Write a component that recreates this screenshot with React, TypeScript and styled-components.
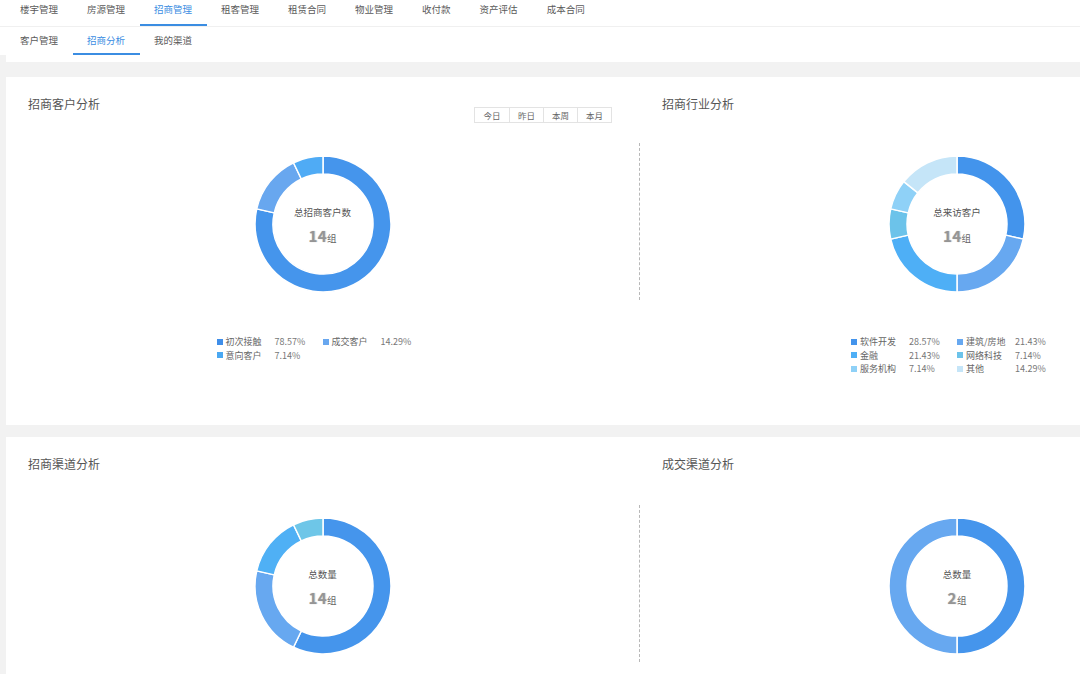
import React from "react";
import styled, { createGlobalStyle } from "styled-components";

const Global = createGlobalStyle`
  html, body { margin: 0; padding: 0; overflow: hidden; background: #f2f2f2; }
  body { font-family: "Noto Sans CJK SC", "Noto Sans", sans-serif; color: #555; }
  * { box-sizing: border-box; }
`;

const Page = styled.div`
  width: 1280px;
  min-height: 674px;
  background: #f2f2f2;
`;

const NavRow = styled.nav<{ $second?: boolean }>`
  display: flex;
  background: #fff;
  padding-left: 5.5px;
  height: ${(p) => (p.$second ? "28px" : "27px")};
  border-bottom: ${(p) => (p.$second ? "none" : "1px solid #f0f0f0")};
`;

const NavItem = styled.div<{ $active?: boolean; $second?: boolean }>`
  padding: ${(p) => (p.$second ? "4px" : "0")} 14.5px 0;
  height: ${(p) => (p.$second ? "28px" : "26px")};
  line-height: 18px;
  font-size: 9.5px;
  color: ${(p) => (p.$active ? "#3b8de2" : "#5a5a5a")};
  border-bottom: 2px solid ${(p) => (p.$active ? "#3b8de2" : "transparent")};
  white-space: nowrap;
`;

const Content = styled.main`
  padding: 0 6px;
  display: flex;
  flex-direction: column;
`;

const Strip = styled.div`
  height: 7px;
  background: #fff;
  margin-bottom: 15px;
`;

const Card = styled.section<{ $h?: number; $gap?: number }>`
  background: #fff;
  height: ${(p) => (p.$h ? `${p.$h}px` : "auto")};
  margin-bottom: ${(p) => p.$gap ?? 0}px;
  display: grid;
  grid-template-columns: 633px 1px 634px;
`;

const Half = styled.div`
  display: flex;
  flex-direction: column;
  padding-left: 22px;
`;

const Header = styled.div`
  height: 46px;
  display: flex;
  justify-content: space-between;
  align-items: flex-start;
  padding-right: 27px;
`;

const Title = styled.h2`
  margin: 19px 0 0;
  font-size: 12px;
  line-height: 16px;
  font-weight: 400;
  color: #555;
`;

const BtnGroup = styled.div`
  margin-top: 30px;
  display: flex;
  border: 1px solid #e3e3e3;
`;

const Btn = styled.div`
  width: 34px;
  height: 14px;
  line-height: 14px;
  text-align: center;
  font-size: 8.5px;
  color: #666;
  & + & { border-left: 1px solid #e3e3e3; }
`;

const Divider = styled.div<{ $top: number }>`
  margin-top: ${(p) => p.$top}px;
  height: 157px;
  border-left: 1px dashed #b8b8b8;
`;

const ChartWrap = styled.div<{ $top: number }>`
  margin-top: ${(p) => p.$top}px;
  margin-left: -22px;
  display: grid;
  place-items: center;
  & > * { grid-area: 1 / 1; }
`;

const Center = styled.div`
  display: flex;
  flex-direction: column;
  align-items: center;
  padding-top: 4px;
`;

const CenterLabel = styled.div`
  font-size: 9.5px;
  line-height: 12px;
  color: #555;
`;

const CenterValue = styled.div`
  margin-top: 10px;
  line-height: 16px;
  display: flex;
  align-items: baseline;
`;

const Num = styled.span`
  font-size: 15px;
  font-weight: 700;
  color: #959595;
  text-shadow: 0 0 1px #c8c8c8, 1px 0 1px #ddd;
  letter-spacing: 0.5px;
`;

const Unit = styled.span`
  font-size: 9.5px;
  color: #666;
`;

const Legend = styled.div`
  margin-top: 41px;
  margin-left: -22px;
  display: grid;
  grid-template-columns: 106px 106px;
  justify-content: center;
`;

const LegendItem = styled.div`
  display: flex;
  align-items: center;
  height: 13.5px;
  font-size: 9px;
  color: #666;
  white-space: nowrap;
`;

const Swatch = styled.i<{ $c: string }>`
  width: 6px;
  height: 6px;
  background: ${(p) => p.$c};
  margin-right: 3px;
  flex: none;
`;

const LName = styled.span`
  width: 49px;
`;

const LVal = styled.span`
  color: #777;
`;

type Seg = { name: string; value: number; color: string; legend?: string; pct?: string };

function pt(cx: number, cy: number, r: number, a: number) {
  const rad = (a * Math.PI) / 180;
  return [cx + r * Math.sin(rad), cy - r * Math.cos(rad)];
}

function arcPath(cx: number, cy: number, R: number, r: number, a0: number, a1: number) {
  const large = a1 - a0 > 180 ? 1 : 0;
  const [x0, y0] = pt(cx, cy, R, a0);
  const [x1, y1] = pt(cx, cy, R, a1);
  const [x2, y2] = pt(cx, cy, r, a1);
  const [x3, y3] = pt(cx, cy, r, a0);
  return `M${x0} ${y0} A${R} ${R} 0 ${large} 1 ${x1} ${y1} L${x2} ${y2} A${r} ${r} 0 ${large} 0 ${x3} ${y3} Z`;
}

function Donut({ segs }: { segs: Seg[] }) {
  const total = segs.reduce((s, x) => s + x.value, 0);
  let a = 0;
  return (
    <svg width="140" height="140" viewBox="0 0 140 140">
      {segs.map((s) => {
        const a0 = a;
        const a1 = a + (s.value / total) * 360;
        a = a1;
        return (
          <path
            key={s.name}
            d={arcPath(70, 70, 68, 50, a0, a1)}
            fill={s.color}
            stroke="#fff"
            strokeWidth={1.5}
            strokeLinejoin="round"
          />
        );
      })}
    </svg>
  );
}

function Chart({ segs, label, num, top }: { segs: Seg[]; label: string; num: string; top: number }) {
  return (
    <ChartWrap $top={top}>
      <Donut segs={segs} />
      <Center>
        <CenterLabel>{label}</CenterLabel>
        <CenterValue>
          <Num>{num}</Num>
          <Unit>组</Unit>
        </CenterValue>
      </Center>
    </ChartWrap>
  );
}

function LegendBox({ segs }: { segs: Seg[] }) {
  return (
    <Legend>
      {segs.map((s) => (
        <LegendItem key={s.name}>
          <Swatch $c={s.legend ?? s.color} />
          <LName>{s.name}</LName>
          <LVal>{s.pct}</LVal>
        </LegendItem>
      ))}
    </Legend>
  );
}

const customerSegs: Seg[] = [
  { name: "初次接触", value: 11, color: "#4595ec", legend: "#3f8ee9", pct: "78.57%" },
  { name: "成交客户", value: 2, color: "#68a7ef", legend: "#68a7ef", pct: "14.29%" },
  { name: "意向客户", value: 1, color: "#4fabf5", legend: "#4aa8f2", pct: "7.14%" },
];

const industrySegs: Seg[] = [
  { name: "软件开发", value: 4, color: "#4394ec", pct: "28.57%" },
  { name: "建筑/房地", value: 3, color: "#67a8f0", pct: "21.43%" },
  { name: "金融", value: 3, color: "#4eaff6", pct: "21.43%" },
  { name: "网络科技", value: 1, color: "#6cc3ea", pct: "7.14%" },
  { name: "服务机构", value: 1, color: "#8fd1f7", pct: "7.14%" },
  { name: "其他", value: 2, color: "#c5e5f8", pct: "14.29%" },
];

const channelSegs: Seg[] = [
  { name: "a", value: 8, color: "#4595ec" },
  { name: "b", value: 3, color: "#67a8f0" },
  { name: "c", value: 2, color: "#4fb0f5" },
  { name: "d", value: 1, color: "#6ec6e8" },
];

const dealSegs: Seg[] = [
  { name: "a", value: 1, color: "#4595ec" },
  { name: "b", value: 1, color: "#67a8f0" },
];

const topNav = ["楼宇管理", "房源管理", "招商管理", "租客管理", "租赁合同", "物业管理", "收付款", "资产评估", "成本合同"];
const subNav = ["客户管理", "招商分析", "我的渠道"];

export default function App() {
  return (
    <Page>
      <Global />
      <NavRow>
        {topNav.map((t) => (
          <NavItem key={t} $active={t === "招商管理"}>
            {t}
          </NavItem>
        ))}
      </NavRow>
      <NavRow $second>
        {subNav.map((t) => (
          <NavItem key={t} $second $active={t === "招商分析"}>
            {t}
          </NavItem>
        ))}
      </NavRow>
      <Content>
        <Strip />
        <Card $h={348} $gap={12}>
          <Half>
            <Header>
              <Title>招商客户分析</Title>
              <BtnGroup>
                <Btn>今日</Btn>
                <Btn>昨日</Btn>
                <Btn>本周</Btn>
                <Btn>本月</Btn>
              </BtnGroup>
            </Header>
            <Chart segs={customerSegs} label="总招商客户数" num="14" top={31} />
            <LegendBox segs={customerSegs} />
          </Half>
          <Divider $top={66} />
          <Half>
            <Header>
              <Title>招商行业分析</Title>
            </Header>
            <Chart segs={industrySegs} label="总来访客户" num="14" top={31} />
            <LegendBox segs={industrySegs} />
          </Half>
        </Card>
        <Card $h={260}>
          <Half>
            <Header>
              <Title>招商渠道分析</Title>
            </Header>
            <Chart segs={channelSegs} label="总数量" num="14" top={33} />
          </Half>
          <Divider $top={68} />
          <Half>
            <Header>
              <Title>成交渠道分析</Title>
            </Header>
            <Chart segs={dealSegs} label="总数量" num="2" top={33} />
          </Half>
        </Card>
      </Content>
    </Page>
  );
}
